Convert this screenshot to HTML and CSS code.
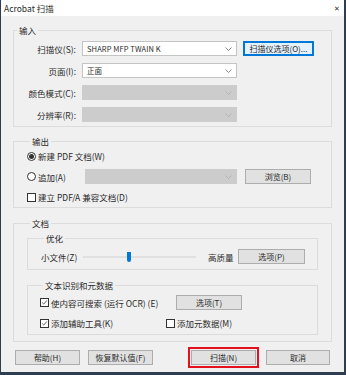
FILE: index.html
```html
<!DOCTYPE html>
<html lang="zh-CN">
<head>
  <meta charset="UTF-8" />
  <title>Acrobat 扫描</title>
  <link rel="stylesheet" href="styles.css">
</head>
<body>

  <div class="window">

    <!-- Title bar -->
    <div class="titlebar">
      <span class="title">Acrobat 扫描</span>
      <span class="close">✕</span>
    </div>

    <div class="content">

      <!-- Input -->
      <fieldset class="group">
        <legend>输入</legend>
        <div class="form-row">
          <label class="field-label">扫描仪(S):</label>
          <div class="combo"><span class="combo-text">SHARP MFP TWAIN K</span><svg class="chev" viewBox="0 0 7 4"><polyline points="0.5,0.5 3.5,3.5 6.5,0.5"/></svg></div>
          <button class="btn btn-focus">扫描仪选项(O)...</button>
        </div>
        <div class="form-row">
          <label class="field-label">页面(I):</label>
          <div class="combo"><span class="combo-text">正面</span><svg class="chev" viewBox="0 0 7 4"><polyline points="0.5,0.5 3.5,3.5 6.5,0.5"/></svg></div>
        </div>
        <div class="form-row">
          <label class="field-label">颜色模式(C):</label>
          <div class="combo disabled"><span class="combo-text"></span><svg class="chev" viewBox="0 0 7 4"><polyline points="0.5,0.5 3.5,3.5 6.5,0.5"/></svg></div>
        </div>
        <div class="form-row">
          <label class="field-label">分辨率(R):</label>
          <div class="combo disabled"><span class="combo-text"></span><svg class="chev" viewBox="0 0 7 4"><polyline points="0.5,0.5 3.5,3.5 6.5,0.5"/></svg></div>
        </div>
      </fieldset>

      <!-- Output -->
      <fieldset class="group group-output">
        <legend>输出</legend>
        <div class="check-row">
          <span class="radio checked"></span>新建 PDF 文档(W)
        </div>
        <div class="form-row">
          <span class="check-row append"><span class="radio"></span>追加(A)</span>
          <div class="combo disabled combo-append"><span class="combo-text"></span><svg class="chev" viewBox="0 0 7 4"><polyline points="0.5,0.5 3.5,3.5 6.5,0.5"/></svg></div>
          <button class="btn btn-browse">浏览(B)</button>
        </div>
        <div class="check-row">
          <span class="checkbox"></span>建立 PDF/A 兼容文档(D)
        </div>
      </fieldset>

      <!-- Document -->
      <fieldset class="group group-doc">
        <legend>文档</legend>

        <fieldset class="group inner">
          <legend>优化</legend>
          <div class="form-row slider-row">
            <span class="slider-label">小文件(Z)</span>
            <div class="slider">
              <span class="slider-thumb"></span>
            </div>
            <span class="slider-end">高质量</span>
            <button class="btn">选项(P)</button>
          </div>
        </fieldset>

        <fieldset class="group inner inner-ocr">
          <legend>文本识别和元数据</legend>
          <div class="form-row">
            <span class="check-row ocr"><span class="checkbox checked"><svg viewBox="0 0 9 9"><polyline points="1.5,4.5 3.5,6.5 7.5,2"/></svg></span>使内容可搜索 (运行 OCR) (E)</span>
            <button class="btn">选项(T)</button>
          </div>
          <div class="form-row">
            <span class="check-row tools"><span class="checkbox checked"><svg viewBox="0 0 9 9"><polyline points="1.5,4.5 3.5,6.5 7.5,2"/></svg></span>添加辅助工具(K)</span>
            <span class="check-row"><span class="checkbox"></span>添加元数据(M)</span>
          </div>
        </fieldset>
      </fieldset>

      <!-- Dialog buttons -->
      <div class="footer">
        <button class="btn btn-footer">帮助(H)</button>
        <button class="btn btn-footer">恢复默认值(F)</button>
        <button class="btn btn-footer btn-scan">扫描(N)</button>
        <button class="btn btn-footer btn-cancel">取消</button>
      </div>

    </div>
  </div>

</body>
</html>
```

FILE: styles.css
```css
html, body {
  margin: 0;
  padding: 0;
  background: #2e3e4f;
}

body {
  font-family: "Noto Sans CJK SC", "Noto Sans", sans-serif;
  font-size: 8.5px;
  color: #2a2a2a;
}

.window {
  width: 343px;
  height: 372px;
  margin-left: 1px;
  background: #f0f0f0;
  overflow: hidden;
}

.titlebar {
  height: 16px;
  background: #fff;
  display: flex;
  align-items: center;
  justify-content: space-between;
  padding: 0 4px 0 3px;
  line-height: 16px;
}

.close {
  font-size: 7px;
  color: #333;
}

.content {
  padding: 8px 12px 0 12px;
}

/* group boxes */
.group {
  margin: 0;
  padding: 5px 16px 4px 0;
  border: 1px solid #dcdcdc;
  min-width: 0;
}

.group legend {
  margin-left: 3px;
  padding: 0 2px;
  line-height: 12px;
  height: 12px;
}

.form-row {
  display: flex;
  align-items: center;
  height: 15px;
}

.form-row + .form-row {
  margin-top: 7px;
}

.field-label {
  width: 62px;
  text-align: right;
  margin-right: 6px;
  flex: none;
}

.combo {
  width: 155px;
  height: 15px;
  box-sizing: border-box;
  border: 1px solid #c4c4c4;
  background: #fff;
  display: flex;
  align-items: center;
  padding: 0 4px 0 4px;
  flex: none;
}

.combo-text {
  flex: 1;
  font-size: 7.5px;
  letter-spacing: 0.1px;
  white-space: nowrap;
}

.combo.disabled {
  background: #cccccc;
  border-color: #cccccc;
}

.chev {
  width: 7px;
  height: 4px;
  fill: none;
  stroke: #8a8a8a;
  stroke-width: 1;
}

.combo.disabled .chev {
  stroke: #b4b4b4;
}

.btn {
  height: 15px;
  box-sizing: border-box;
  border: 1px solid #adadad;
  background: #e1e1e1;
  font: inherit;
  font-size: 8px;
  color: #2a2a2a;
  padding: 0;
  line-height: 13px;
  flex: none;
}

.btn-focus {
  margin-left: 6px;
  width: 71px;
  border-color: #0078d7;
  box-shadow: inset 0 0 0 1px #0078d7;
  background: #e5f1fb;
}

/* radios and checkboxes */
.check-row {
  display: flex;
  align-items: center;
  height: 12px;
  white-space: nowrap;
}

.radio,
.checkbox {
  width: 9px;
  height: 9px;
  box-sizing: border-box;
  border: 1px solid #333;
  background: #fff;
  margin-right: 2px;
  flex: none;
  display: flex;
  align-items: center;
  justify-content: center;
}

.radio {
  border-radius: 50%;
}

.radio.checked::after {
  content: "";
  width: 5px;
  height: 5px;
  border-radius: 50%;
  background: #333;
}

.checkbox svg {
  width: 9px;
  height: 9px;
  fill: none;
  stroke: #333;
  stroke-width: 1;
}

.group-output {
  margin-top: 8px;
  padding: 3px 0 4px 13px;
}

.group-output > .check-row + .form-row,
.group-output > .form-row + .check-row {
  margin-top: 7px;
}

.append {
  width: 58px;
}

.combo-append {
  width: 152px;
}

.btn-browse {
  width: 66px;
  margin-left: 8px;
}

.group-doc {
  margin-top: 9px;
  padding: 3px 13px 6px 13px;
}

.group.inner {
  padding: 5px 11px 5px 13px;
}

.slider-row .btn {
  width: 67px;
}

.slider-label {
  width: 42px;
  flex: none;
}

.slider {
  width: 113px;
  height: 2px;
  background: #e0e0e0;
  margin-right: 12px;
  display: flex;
  align-items: center;
  flex: none;
}

.slider-thumb {
  width: 4px;
  height: 10px;
  background: #0078d7;
  margin-left: 44px;
  border-radius: 0 0 2px 2px;
}

.slider-end {
  width: 30px;
  flex: none;
}

.inner-ocr {
  margin-top: 9px;
}

.group.inner-ocr {
  padding: 4px 11px 5px 12px;
}

.ocr {
  width: 136px;
}

.ocr + .btn {
  width: 66px;
}

.tools {
  width: 126px;
}

.inner-ocr .form-row:last-child {
  height: 12px;
}

/* footer */
.footer {
  display: flex;
  margin-top: 8px;
  padding-left: 2px;
}

.btn-footer {
  width: 65px;
}

.btn-footer + .btn-footer {
  margin-left: 8px;
}

.btn-footer.btn-scan {
  margin-left: 38px;
  outline: 2px solid #e5101d;
  outline-offset: 1px;
}

.btn-footer.btn-cancel {
  margin-left: 10px;
  width: 64px;
}
```
